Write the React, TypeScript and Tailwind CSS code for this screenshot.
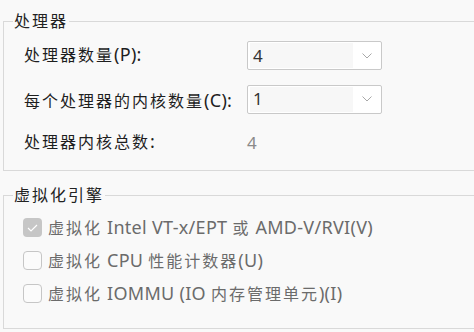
import React from 'react';

const font = { fontFamily: '"Noto Sans", "Noto Sans CJK SC", sans-serif' };

// splits a label into CJK / latin runs so the CJK glyphs can get extra tracking
function Txt({ s }: { s: string }) {
  const parts = s.match(/[\u3000-\u9fff\uff00-\uffef]+|[^\u3000-\u9fff\uff00-\uffef]+/g) || [];
  return (
    <>
      {parts.map((p, i) =>
        /[\u3000-\u9fff]/.test(p) ? (
          <span key={i} className="tracking-[2px]">{p}</span>
        ) : (
          <span key={i} className="text-[18px] leading-none tracking-[0.3px]">{p}</span>
        )
      )}
    </>
  );
}

const Combo = ({ value }: { value: string }) => (
  <div className="flex h-[29px] w-[135px] items-center rounded-[2px] border border-[#c9c9c9] bg-white">
    <div className="ml-[2px] flex h-[25px] w-[103px] items-center bg-[#f7f7f7] pl-[3px] text-[17px] text-[#333]">{value}</div>
    <svg className="ml-auto mr-[9px]" width="10" height="6" viewBox="0 0 10 6">
      <path d="M0.5 0.5 L5 5 L9.5 0.5" fill="none" stroke="#a8a8a8" strokeWidth="1" />
    </svg>
  </div>
);

const Check = ({ checked, label }: { checked?: boolean; label: string }) => (
  <div className="flex h-[33px] items-center gap-[6px]">
    {checked ? (
      <div className="flex h-[19px] w-[19px] items-center justify-center rounded-[4px] bg-[#c6c6c6]">
        <svg width="11" height="8" viewBox="0 0 11 8">
          <path d="M1 4 L4 7 L10 1" fill="none" stroke="#fff" strokeWidth="1.2" />
        </svg>
      </div>
    ) : (
      <div className="h-[19px] w-[19px] rounded-[4px] border border-[#c6c6c6] bg-[#fbfbfb]" />
    )}
    <span className="text-[#6b6b6b]"><Txt s={label} /></span>
  </div>
);

export default function App() {
  return (
    <div className="h-[332px] w-[474px] overflow-hidden bg-[#f9f9f9] pl-[3px] text-[16px]" style={font}>
      <fieldset className="mt-[9px] h-[162px] w-[480px] border border-[#d9d9d9] pl-[9px]">
        <legend className="px-[1px] text-[16px] leading-[24px] text-[#222]"><Txt s="处理器" /></legend>
        <div className="grid grid-cols-[223px_1fr] items-center pl-[11px] pt-[8px] text-[#1e1e1e]">
          <div className="h-[29px] leading-[29px]"><Txt s="处理器数量(P):" /></div>
          <Combo value="4" />
          <div className="mt-[14px] h-[30px] leading-[35px]"><Txt s="每个处理器的内核数量(C):" /></div>
          <div className="mt-[14px]"><Combo value="1" /></div>
          <div className="mt-[14px] leading-[29px]"><Txt s="处理器内核总数:" /></div>
          <div className="mt-[14px] text-[17px] leading-[29px] text-[#8a8a8a]">4</div>
        </div>
      </fieldset>
      <fieldset className="mt-[12px] h-[146px] w-[480px] border border-[#d9d9d9] pl-[9px]">
        <legend className="px-[1px] text-[16px] leading-[24px] text-[#222]"><Txt s="虚拟化引擎" /></legend>
        <div className="pl-[10px] pt-[4px]">
          <Check checked label="虚拟化 Intel VT-x/EPT 或 AMD-V/RVI(V)" />
          <Check label="虚拟化 CPU 性能计数器(U)" />
          <Check label="虚拟化 IOMMU (IO 内存管理单元)(I)" />
        </div>
      </fieldset>
    </div>
  );
}
